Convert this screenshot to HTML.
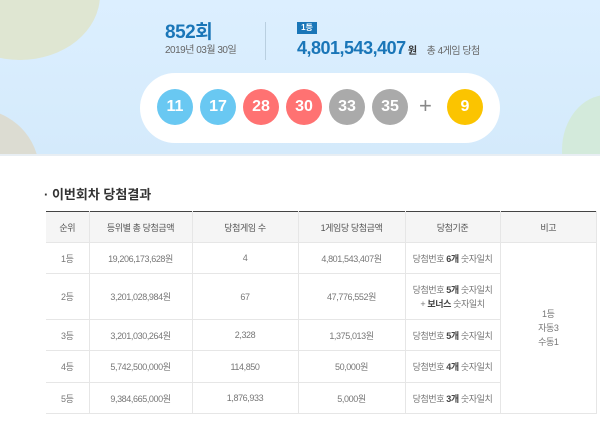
<!DOCTYPE html>
<html><head><meta charset="utf-8"><style>
*{margin:0;padding:0;box-sizing:border-box}
body{width:600px;height:432px;background:#fff;font-family:"Liberation Sans","Noto Sans CJK KR",sans-serif;position:relative;overflow:hidden;color:#666}
.banner{position:absolute;left:0;top:0;width:600px;height:156px;background:linear-gradient(#dcefff,#d4eafb);overflow:hidden}
.banner:after{content:"";position:absolute;left:0;right:0;bottom:0;height:2px;background:#e8eef3}
.b1{position:absolute;left:-60px;top:-70px;width:160px;height:130px;border-radius:50%;background:#dfe6d2}
.b2{position:absolute;left:-80px;top:110px;width:120px;height:110px;border-radius:50%;background:#dcdcd2;transform:rotate(30deg)}
.b3{position:absolute;left:562px;top:95px;width:90px;height:110px;border-radius:50%;background:#d3eadb}
.a{position:absolute;white-space:nowrap}
.pill{position:absolute;left:140px;top:73px;width:360px;height:70px;border-radius:35px;background:#fff}
.ball{position:absolute;top:89px;width:36px;height:36px;border-radius:50%;color:#fff;font-weight:bold;font-size:16px;text-align:center;line-height:36px;margin-left:-18px}
.bl{background:#69c8f2}.rd{background:#ff7272}.gy{background:#aaa}.yl{background:#fbc400}
table{position:absolute;left:46px;top:211px;width:551px;border-collapse:collapse;font-size:9px;color:#777;letter-spacing:-0.4px}
td,th{border:1px solid #e6e6e6;text-align:center;font-weight:normal}
th{background:#f5f5f5;height:31px;color:#555;border-top:1px solid #444}
td{height:31px}
td b{color:#444}
tr td:first-child,tr th:first-child{border-left:none}
</style></head><body>
<div class="banner"><div class="b1"></div><div class="b2"></div><div class="b3"></div>
<div class="a" style="left:165px;top:17px;font-size:19px;color:#1a76b8;font-weight:bold;letter-spacing:-0.5px">852회</div>
<div class="a" style="left:165px;top:41px;font-size:10px;color:#666;letter-spacing:-0.5px">2019년 03월 30일</div>
<div class="a" style="left:265px;top:22px;width:1px;height:38px;background:#b9cfe0"></div>
<div class="a" style="left:297px;top:22px;width:20px;height:12px;background:#1a76b8;color:#fff;font-size:8px;text-align:center;line-height:12px;font-weight:bold">1등</div>
<div class="a" style="left:297px;top:38px;font-size:18px;color:#1a76b8;font-weight:bold;letter-spacing:-0.5px">4,801,543,407<span style="font-size:10px;color:#333"> 원</span><span style="font-size:10px;color:#666;font-weight:normal;margin-left:10px">총 4게임 당첨</span></div>
<div class="pill"></div>
<div class="ball bl" style="left:175px">11</div>
<div class="ball bl" style="left:218px">17</div>
<div class="ball rd" style="left:261px">28</div>
<div class="ball rd" style="left:304px">30</div>
<div class="ball gy" style="left:347px">33</div>
<div class="ball gy" style="left:390px">35</div>
<div class="a" style="left:419px;top:93px;font-size:22px;color:#888">+</div>
<div class="ball yl" style="left:465px">9</div>
</div>
<div class="a" style="left:44px;top:184px;font-size:13px;color:#333;font-weight:bold">· 이번회차 당첨결과</div>
<table>
<tr><th style="width:43px">순위</th><th style="width:103px">등위별 총 당첨금액</th><th style="width:106px">당첨게임 수</th><th style="width:107px">1게임당 당첨금액</th><th style="width:95px">당첨기준</th><th>비고</th></tr>
<tr><td>1등</td><td>19,206,173,628원</td><td>4</td><td>4,801,543,407원</td><td>당첨번호 <b>6개</b> 숫자일치</td><td rowspan="5" style="line-height:14px">1등<br>자동3<br>수동1</td></tr>
<tr><td style="height:46px">2등</td><td>3,201,028,984원</td><td>67</td><td>47,776,552원</td><td style="line-height:14px">당첨번호 <b>5개</b> 숫자일치<br>+ <b>보너스</b> 숫자일치</td></tr>
<tr><td style="height:30px">3등</td><td>3,201,030,264원</td><td>2,328</td><td>1,375,013원</td><td>당첨번호 <b>5개</b> 숫자일치</td></tr>
<tr><td style="height:32px">4등</td><td>5,742,500,000원</td><td>114,850</td><td>50,000원</td><td>당첨번호 <b>4개</b> 숫자일치</td></tr>
<tr><td>5등</td><td>9,384,665,000원</td><td>1,876,933</td><td>5,000원</td><td>당첨번호 <b>3개</b> 숫자일치</td></tr>
</table>
</body></html>
